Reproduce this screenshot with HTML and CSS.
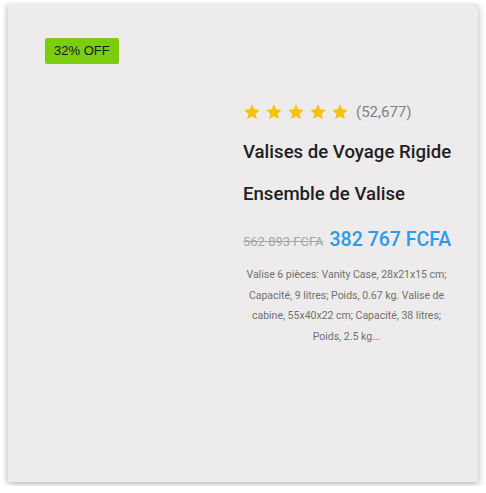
FILE: index.html
```html
<!DOCTYPE html>
<html>
<head>
<meta charset="utf-8">
<link rel="stylesheet" href="styles.css">
</head>
<body>
<div class="card">
  <div class="left">
    <span class="badge">32% OFF</span>
  </div>
  <div class="info">
    <div class="rating">
      <span class="stars">
        <svg viewBox="0 0 24 24"><path d="M12 1.8l3.1 6.6 7.2.9-5.3 5 1.4 7.1L12 17.9l-6.4 3.5L7 14.3l-5.3-5 7.2-.9z"/></svg>
        <svg viewBox="0 0 24 24"><path d="M12 1.8l3.1 6.6 7.2.9-5.3 5 1.4 7.1L12 17.9l-6.4 3.5L7 14.3l-5.3-5 7.2-.9z"/></svg>
        <svg viewBox="0 0 24 24"><path d="M12 1.8l3.1 6.6 7.2.9-5.3 5 1.4 7.1L12 17.9l-6.4 3.5L7 14.3l-5.3-5 7.2-.9z"/></svg>
        <svg viewBox="0 0 24 24"><path d="M12 1.8l3.1 6.6 7.2.9-5.3 5 1.4 7.1L12 17.9l-6.4 3.5L7 14.3l-5.3-5 7.2-.9z"/></svg>
        <svg viewBox="0 0 24 24"><path d="M12 1.8l3.1 6.6 7.2.9-5.3 5 1.4 7.1L12 17.9l-6.4 3.5L7 14.3l-5.3-5 7.2-.9z"/></svg>
      </span>
      <span class="count">(52,677)</span>
    </div>
    <h2 class="title">Valises de Voyage Rigide</h2>
    <h2 class="title">Ensemble de Valise</h2>
    <div class="price">
      <span class="old">562 893 FCFA</span>
      <span class="new">382 767 FCFA</span>
    </div>
    <p class="desc">Valise 6 pièces: Vanity Case, 28x21x15 cm; Capacité, 9 litres; Poids, 0.67 kg. Valise de cabine, 55x40x22 cm; Capacité, 38 litres; Poids, 2.5 kg...</p>
  </div>
</div>
</body>
</html>
```
FILE: styles.css
```css
* { box-sizing: border-box; }
html, body { margin: 0; padding: 0; background: #ffffff; }
body { padding: 4px 8px; font-family: "Roboto", "Liberation Sans", sans-serif; }
.card {
  width: 470px;
  height: 478px;
  background: #edebeb;
  box-shadow: -2px 1px 5px rgba(0,0,0,0.18), 3px 3px 6px rgba(0,0,0,0.14);
  display: flex;
  padding: 34px 0 0 37px;
}
.left { width: 198px; flex: none; }
.badge {
  display: inline-block;
  background: #7ccc10;
  color: #1a1a1a;
  font-family: "Liberation Sans", sans-serif;
  font-size: 13px;
  line-height: 26px;
  padding: 0 9px;
  border-radius: 2px;
}
.info { width: 207px; flex: none; padding-top: 63px; display: flex; flex-direction: column; }
.rating { display: flex; align-items: center; height: 22px; }
.stars { display: flex; gap: 4px; }
.stars svg { width: 18px; height: 18px; fill: #f4c312; display: block; }
.count { margin-left: 7px; color: #7b848c; font-size: 15px; }
.title { margin: 0; font-weight: 500; font-size: 18.6px; color: #1d1f22; line-height: 24px; white-space: nowrap; }
.rating + .title { margin-top: 17px; }
.title + .title { margin-top: 18px; }
.price { display: flex; align-items: baseline; margin-top: 22px; white-space: nowrap; }
.old { color: #a3a8ac; font-size: 13px; text-decoration: line-through; margin-right: 6px; }
.new { color: #2b9be8; font-size: 19.5px; font-weight: 500; }
.desc { margin: 14px 0 0; text-align: center; color: #6d7175; font-size: 10.5px; line-height: 20.7px; }
```
